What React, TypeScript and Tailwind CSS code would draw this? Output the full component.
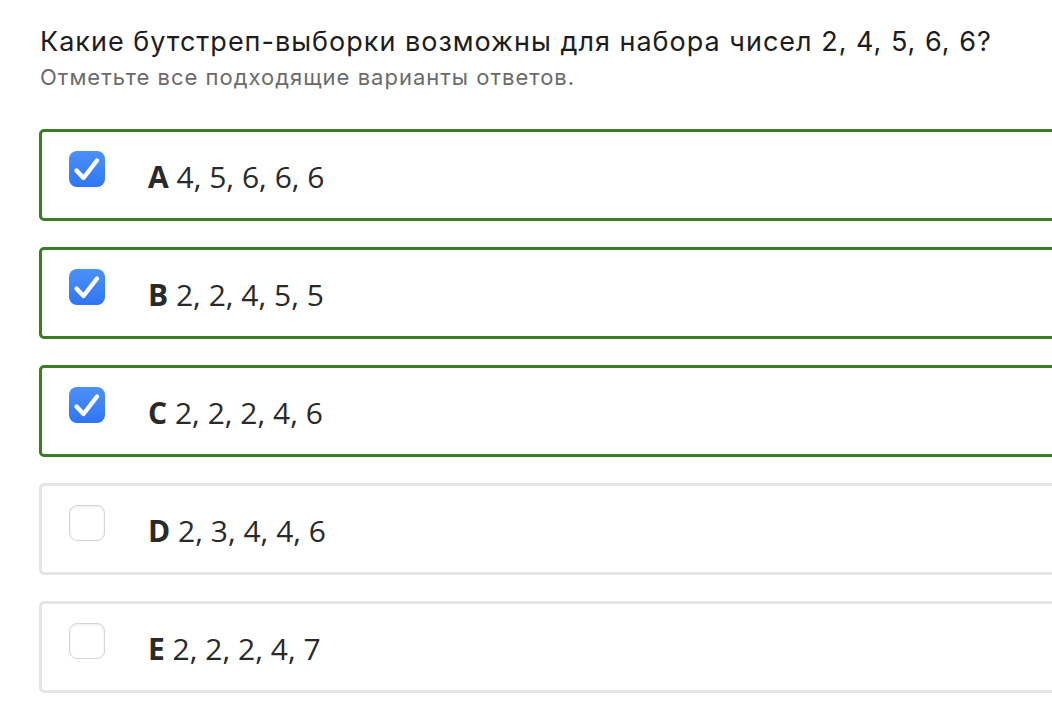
import React from "react";

const options = [
  { letter: "A", text: "4, 5, 6, 6, 6", checked: true },
  { letter: "B", text: "2, 2, 4, 5, 5", checked: true },
  { letter: "C", text: "2, 2, 2, 4, 6", checked: true },
  { letter: "D", text: "2, 3, 4, 4, 6", checked: false },
  { letter: "E", text: "2, 2, 2, 4, 7", checked: false },
];

function Check({ checked }: { checked: boolean }) {
  if (checked) {
    return (
      <div className="w-[36px] h-[36px] rounded-[8px] bg-gradient-to-b from-[#4d90f9] to-[#2f75f4] shrink-0">
        <svg width="36" height="36" viewBox="0 0 36 36" fill="none">
          <path d="M7.5 19.5 L14.5 27 L28 9.5" stroke="white" strokeWidth="4.4" strokeLinecap="round" strokeLinejoin="round" />
        </svg>
      </div>
    );
  }
  return (
    <div className="w-[36px] h-[36px] rounded-[8px] bg-white border border-[#d4d4d4] shadow-[inset_0_1px_3px_rgba(0,0,0,0.08)] shrink-0" />
  );
}

export default function App() {
  return (
    <div className="w-[1052px] h-[704px] overflow-hidden bg-white">
      <div className="pl-[40px] pt-[24px]">
        <h1
          className="text-[27px] leading-[36px] text-[#1d1d1d] tracking-[1px]"
          style={{ fontFamily: "Inter, 'Noto Sans', sans-serif" }}
        >
          Какие бутстреп-выборки возможны для набора чисел 2, 4, 5, 6, 6?
        </h1>
        <p
          className="mt-[2px] text-[22px] leading-[30px] text-[#6b6b6b] tracking-[1px]"
          style={{ fontFamily: "Inter, 'Noto Sans', sans-serif" }}
        >
          Отметьте все подходящие варианты ответов.
        </p>
      </div>
      <div className="pl-[39px] pt-[37px] flex flex-col gap-[26px]">
        {options.map((o) => (
          <div
            key={o.letter}
            className={`w-[1100px] h-[92px] rounded-[5px] border-[3px] flex items-start pl-[27px] pt-[19px] ${
              o.checked ? "border-[#3b7d22]" : "border-[#e5e5e5]"
            }`}
          >
            <Check checked={o.checked} />
            <div
              className="ml-[43px] mt-[7px] text-[30px] leading-[38px] text-[#2a2a2a]"
              style={{ fontFamily: "'Open Sans', sans-serif" }}
            >
              <span className="font-bold">{o.letter}</span> {o.text}
            </div>
          </div>
        ))}
      </div>
    </div>
  );
}
